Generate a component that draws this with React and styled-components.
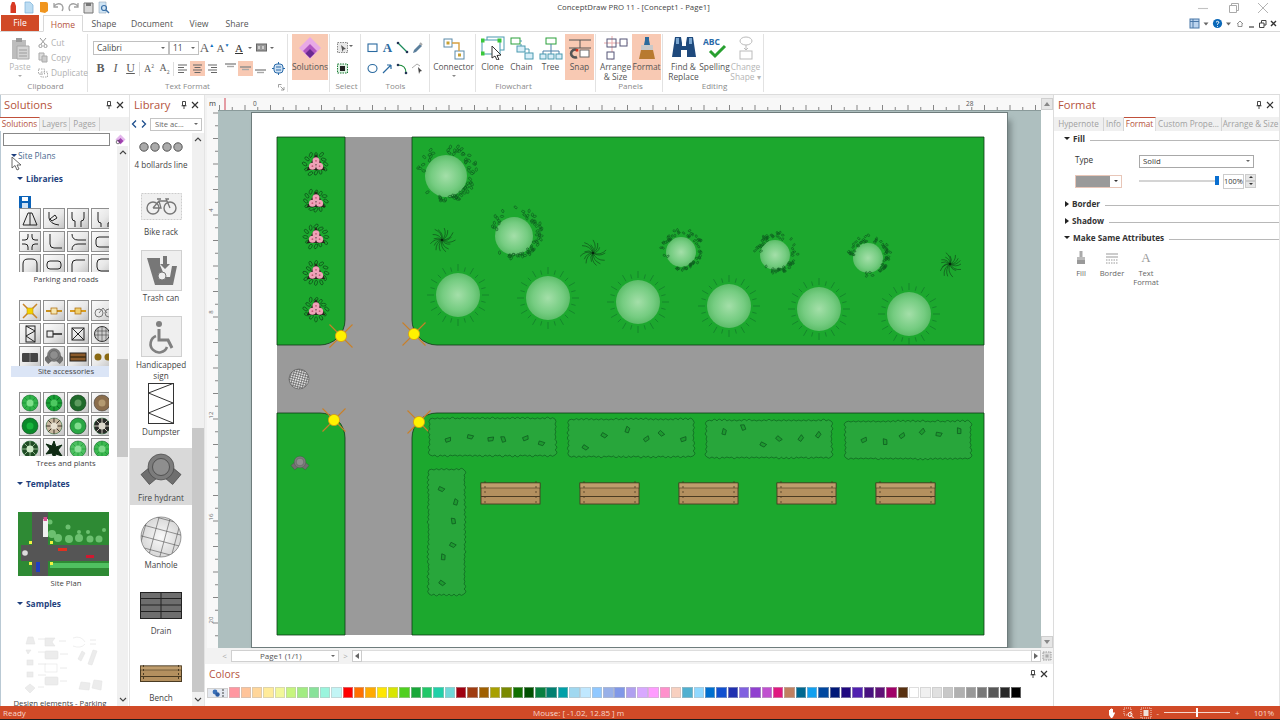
import React from "react";
import styled, { createGlobalStyle } from "styled-components";

const FONT = `"Open Sans", "Noto Sans", sans-serif`;

const Global = createGlobalStyle`
  html, body { margin: 0; padding: 0; background: #fff; }
  body { width: 1280px; height: 720px; overflow: hidden; font-family: ${FONT}; color: #444; }
  * { box-sizing: border-box; }
`;

/* ---------- shell ---------- */
const Shell = styled.div`
  width: 1280px; height: 720px; display: flex; flex-direction: column; background: #fff; overflow: hidden;
`;
const TitleBar = styled.div`
  height: 15px; display: flex; align-items: center; justify-content: space-between; position: relative; flex: none;
`;
const Qat = styled.div`
  display: flex; align-items: center; padding-left: 6px; height: 15px;
`;
const QatIcon = styled.svg`
  width: 15px; height: 13px; display: block; flex: none;
`;
const Title = styled.div`
  position: absolute; left: 0; right: 13px; top: 1px; text-align: center;
  font-size: 7.8px; line-height: 13px; color: #444;
`;
const WinButtons = styled.div`
  display: flex; align-items: center; gap: 14px; padding-right: 9px; color: #b4b4b4;
`;
const WinBtn = styled.svg`
  width: 16px; height: 12px; display: block;
`;
const TabRow = styled.div`
  height: 17px; display: flex; align-items: flex-end; flex: none; position: relative; border-bottom: 1px solid #d8d8d8;
`;
const FileTab = styled.div`
  width: 38px; height: 16px; margin-left: 1px; background: #d14a27; color: #fff; font-size: 8.6px; line-height: 17px; text-align: center;
`;
const RibbonTab = styled.div`
  width: ${p => p.$w}px; height: ${p => (p.$active ? 17 : 16)}px; font-size: 8.6px; line-height: 18px;
  text-align: center; color: ${p => (p.$active ? "#b5533c" : "#555")};
  ${p => p.$active && `background:#fff; border:1px solid #d8d8d8; border-bottom:1px solid #fff; margin-bottom:-1px; position:relative;`}
`;
const TopRight = styled.div`
  position: absolute; right: 0; top: 1px; height: 15px; display: flex; align-items: center;
`;
const TopRightIcon = styled.svg`
  width: ${p => p.$w || 11}px; height: 11px; display: block; flex: none;
`;
const Ribbon = styled.div`
  height: 63px; flex: none; display: flex; align-items: flex-start; border-bottom: 1px solid #dcdcdc; padding-top: 2px;
`;
const Group = styled.div`
  width: ${p => p.$w}px; height: 58px; flex: none; display: flex; flex-direction: column; position: relative;
  border-right: 1px solid #e2e2e2;
`;
const GroupBody = styled.div`
  height: 46px; flex: none; display: flex; padding-left: ${p => p.$pl || 0}px; align-items: flex-start;
`;
const GroupLabel = styled.div`
  height: 11px; text-align: center; font-size: 8px; line-height: 11px; color: #8a8a8a;
  padding-left: ${p => p.$pl || 0}px; padding-right: ${p => p.$pr || 0}px;
`;
const Launcher = styled.svg`
  position: absolute; right: 2px; bottom: 1px; width: 7px; height: 7px;
`;
const BigButton = styled.div`
  width: ${p => p.$w}px; height: 46px; flex: none; display: flex; flex-direction: column; align-items: center;
  background: ${p => (p.$on ? "#f8c9b3" : "transparent")};
  color: ${p => (p.$dim ? "#b5b5b5" : "#555")};
`;
const BigIconBox = styled.div`
  height: 28px; flex: none; display: flex; align-items: center; justify-content: center;
`;
const BigIcon = styled.svg`
  width: ${p => p.$s || 24}px; height: ${p => p.$s || 24}px; display: block;
`;
const BigLabel = styled.div`
  font-size: 8.4px; line-height: 9.6px; text-align: center; white-space: nowrap;
`;
const Caret = styled.span`
  display: ${p => (p.$block ? "block" : "inline-block")}; width: 0; height: 0; flex: none;
  ${p => (p.$block ? "margin-top: 3px;" : "")}
  border-left: ${p => p.$s || 2.5}px solid transparent; border-right: ${p => p.$s || 2.5}px solid transparent;
  border-top: ${p => (p.$s || 2.5) * 1.1}px solid ${p => p.$c || "#666"};
`;
const SelectCaret = styled(Caret)`
  margin: 11px 0 0 -1px;
`;
const SideCaret = styled.span`
  display: inline-block; width: 0; height: 0; flex: none;
  border-top: 3px solid transparent; border-bottom: 3px solid transparent; border-left: 4px solid ${p => p.$c || "#222"};
  ${p => (p.$flip ? "transform: scaleX(-1);" : "")}
`;
const ActionColumn = styled.div`
  display: flex; flex-direction: column; margin-left: 4px; padding-top: 1px;
`;
const Action = styled.div`
  height: 15px; display: flex; align-items: center; gap: 3px; font-size: 8.4px; color: #b0b0b0; white-space: nowrap;
`;
const ActionIcon = styled.svg`
  width: 10px; height: 11px; display: block; flex: none;
`;
const FormatStack = styled.div`
  display: flex; flex-direction: column; padding-top: 6px; gap: 6px;
`;
const FormatRow = styled.div`
  display: flex; align-items: center; height: ${p => p.$h || 15}px;
`;
const FontBox = styled.div`
  width: ${p => p.$w}px; height: 14px; flex: none; border: 1px solid #c0c0c0; margin-left: ${p => p.$ml || 0}px;
  display: flex; align-items: center; justify-content: space-between; padding: 0 3px; font-size: 8.4px; color: #444;
`;
const ToolBtn = styled.div`
  width: ${p => p.$w || 15}px; height: 15px; flex: none; display: flex; align-items: center; justify-content: center;
  background: ${p => (p.$on ? "#f8c9b3" : "transparent")}; color: #555; font-size: 10px;
`;
const ToolIcon = styled.svg`
  width: 13px; height: 13px; display: block;
`;
const Sep = styled.div`
  width: 1px; height: 14px; background: #ddd; flex: none; margin: 0 ${p => p.$m || 1}px;
`;
const BoldB = styled.span`
  font-family: "Liberation Serif", serif; font-weight: ${p => (p.$b ? 700 : 400)}; font-style: ${p => (p.$i ? "italic" : "normal")};
  text-decoration: ${p => (p.$u ? "underline" : "none")}; font-size: ${p => p.$s || 11}px; color: ${p => p.$c || "#5c5c5c"};
`;
const Mini = styled.sup`
  font-size: 5px; color: ${p => p.$c || "#5c5c5c"}; font-family: ${FONT};
`;
const MiniSub = styled.sub`
  font-size: 5px; color: #5c5c5c; font-family: ${FONT};
`;
const IconGrid = styled.div`
  display: grid; grid-template-columns: repeat(${p => p.$cols}, 15px); grid-auto-rows: 21px; padding-top: 3px;
  justify-items: center; align-items: center;
`;

/* ---------- main ---------- */
const Main = styled.div`
  height: 611px; flex: none; display: flex;
`;
const Panel = styled.div`
  width: ${p => p.$w}px; flex: none; display: flex; flex-direction: column; height: 100%; background: #fff;
  border-right: 1px solid #e4e4e4; position: relative; overflow: hidden;
  ${p => (p.$edge ? "box-shadow: inset 1px 0 0 #b9c9d4;" : "")}
`;
const PanelHeader = styled.div`
  height: 22px; flex: none; display: flex; align-items: center; justify-content: space-between; padding: 0 5px 3px 4px;
  font-size: 11.2px; color: #b5533c;
`;
const HeaderTools = styled.div`
  display: flex; align-items: center; gap: 3px;
`;
const Glyph = styled.svg`
  width: 8px; height: 8px; display: block;
`;
const SearchGlyph = styled.svg`
  width: 11px; height: 11px; display: block;
`;
const DotsGlyph = styled.svg`
  width: 2px; height: 8px; display: block;
`;
const TabStrip = styled.div`
  height: 14px; flex: none; display: flex; align-items: stretch; background: #f0f0f0; font-size: 8.2px; color: #a0a0a0;
`;
const StripTab = styled.div`
  width: ${p => p.$w}px; flex: none; line-height: 12px; text-align: center; white-space: nowrap;
  border-top: 1px solid ${p => (p.$on ? "#c0503a" : "transparent")};
  border-right: 1px solid ${p => (p.$on ? "#ddd" : "#d4d4d4")};
  background: ${p => (p.$on ? "#fff" : "transparent")};
  color: ${p => (p.$on ? "#b5533c" : "#a0a0a0")};
`;
const SearchRow = styled.div`
  height: 15px; flex: none; display: flex; align-items: center; padding: 1px 0 0 3px; gap: 5px;
`;
const SearchBox = styled.div`
  width: 107px; height: 13px; border: 1px solid #888; background: #fff; flex: none;
`;
const SolutionBody = styled.div`
  flex: 1; position: relative; overflow: hidden; display: flex;
`;
const Tree = styled.div`
  width: 117px; flex: none; overflow: hidden; position: relative;
`;
const TreeRoot = styled.div`
  height: 20px; display: flex; align-items: center; gap: 1px; padding: 0 0 1px 11px; font-size: 8.4px; color: #4a6a90;
`;
const TreeHeading = styled.div`
  height: 14px; margin-top: ${p => p.$mt}px; display: flex; align-items: center; gap: 3px; padding: 0 0 1px 17px;
  font-size: 8.4px; font-weight: 700; color: #1e3f7d;
`;
const SaveIcon = styled.svg`
  width: 12px; height: 12px; display: block; margin: 10px 0 0 19px;
`;
const TileClip = styled.div`
  width: 90px; height: ${p => p.$h}px; margin: ${p => p.$mt || 0}px 0 0 19px; overflow: hidden;
`;
const TileGrid = styled.div`
  display: grid; grid-template-columns: repeat(4, 22px); grid-auto-rows: 21px; gap: 2px; width: 94px;
`;
const Tile = styled.div`
  width: 22px; height: 21px; border: 1px solid #8f8f8f;
  background: linear-gradient(135deg, #fafafa 0%, #e8e8e8 55%, #c4c4c4 100%);
  display: flex; align-items: center; justify-content: center;
`;
const TileSvg = styled.svg`
  width: 18px; height: 18px; display: block;
`;
const TreeCaption = styled.div`
  height: ${p => p.$h || 14}px; width: 98px; margin-left: 11px; padding-left: ${p => (p.$plain ? 0 : 12)}px; text-align: center; font-size: 7.7px;
  line-height: ${p => p.$h || 14}px; color: #444; white-space: nowrap; overflow: hidden;
  background: ${p => (p.$on ? "#dbe5f6" : "transparent")};
`;
const Thumb = styled.svg`
  display: block; width: 91px; height: ${p => p.$h}px; margin: ${p => p.$mt}px 0 0 18px;
`;
const VScroll = styled.div`
  width: ${p => p.$w || 11}px; flex: none; background: #f0f0f0; display: flex; flex-direction: column; align-items: center;
  justify-content: space-between; position: relative; padding: ${p => p.$pad || "3px 0"};
`;
const ScrollThumb = styled.div`
  position: absolute; left: 0; right: 0; top: ${p => p.$t}px; height: ${p => p.$h}px; background: #c8c8c8;
`;
const ArrowGlyph = styled.svg`
  width: 8px; height: 6px; display: block; position: relative; z-index: 1;
`;
const Cursor = styled.svg`
  position: absolute; left: 11px; top: 10px; width: 11px; height: 15px;
`;

const LibNav = styled.div`
  height: 14px; flex: none; display: flex; align-items: center; padding-left: 0; margin-bottom: 2px;
`;
const NavChevron = styled.svg`
  width: 9px; height: 10px; display: block; flex: none;
`;
const LibCombo = styled.div`
  width: 52px; height: 13px; margin-left: 2px; border: 1px solid #c4c4c4; display: flex; align-items: center;
  justify-content: space-between; padding: 0 3px 0 4px; font-size: 7.6px; color: #666; white-space: nowrap;
`;
const LibBody = styled.div`
  flex: 1; display: flex; overflow: hidden; min-height: 0;
`;
const LibList = styled.div`
  width: 62px; flex: none; overflow: hidden;
  display: flex; flex-direction: column; gap: 9.65px;
`;
const LibItem = styled.div`
  height: 57px; flex: none; display: flex; flex-direction: column; align-items: center; position: relative;
  background: ${p => (p.$on ? "#d9d9d9" : "transparent")};
  margin-top: ${p => p.$mt || 0}px;
`;
const LibIconBox = styled.div`
  height: 44px; flex: none; display: flex; align-items: center; justify-content: center;
  padding-top: ${p => p.$pt || 0}px;
`;
const LibIcon = styled.svg`
  width: ${p => p.$w}px; height: ${p => p.$h}px; display: block;
`;
const LibCaption = styled.div`
  font-size: 8.1px; line-height: 11px; text-align: center; color: #444; width: 62px;
`;

/* centre */
const Centre = styled.div`
  flex: 1; min-width: 0; display: flex; flex-direction: column; background: #f2f2f2; border-right: 1px solid #dcdcdc;
  padding-top: 3px; padding-left: 2px;
`;
const RulerRow = styled.div`
  height: 12px; flex: none; display: flex; position: relative;
`;
const RulerCorner = styled.div`
  width: 11px; flex: none; background: #f8f8f8; font-size: 7.5px; line-height: 11px; text-align: center; color: #333;
`;
const RulerSvg = styled.svg`
  display: block; flex: none; background: #f8f8f8;
`;
const ScrollCap = styled.div`
  width: 12px; height: 12px; flex: none; background: #e6e6e6; border: 1px solid #cfcfcf; display: flex; align-items: center; justify-content: center;
`;
const CapUp = styled.span`
  width: 0; height: 0; border-left: 3px solid transparent; border-right: 3px solid transparent; border-bottom: 4px solid #888;
`;
const CapDown = styled.span`
  width: 0; height: 0; border-left: 3px solid transparent; border-right: 3px solid transparent; border-top: 4px solid #888;
`;
const CanvasRow = styled.div`
  height: 538px; flex: none; display: flex;
`;
const Canvas = styled.div`
  flex: 1; background: #aebfbf; overflow: hidden; padding: 2px 0 0 34px; border-top: 1px solid #8a9a9a;
`;
const CanvasScroll = styled.div`
  width: 12px; flex: none; background: #fff; display: flex; flex-direction: column; justify-content: flex-end;
`;
const Sheet = styled.svg`
  display: block; width: 755px; height: 534px; background: #fff; overflow: visible;
  box-shadow: 4px 7px 6px rgba(40,50,50,.4); outline: 1px solid #6e7c7c;
`;
const PageBar = styled.div`
  height: 14px; flex: none; display: flex; align-items: center; padding: 0 0 0 11px; background: #f2f2f2; margin-top: 1px;
  font-size: 8px; color: #555;
`;
const PageArrow = styled.div`
  width: ${p => p.$w || 13}px; flex: none; text-align: center; color: #aaa; font-size: 8px; line-height: 12px;
`;
const FitGlyph = styled.svg`
  width: 10px; height: 10px; display: block; margin: 0 1px;
`;
const PageCombo = styled.div`
  width: 108px; height: 12px; flex: none; background: #fff; border: 1px solid #d0d0d0; display: flex; align-items: center;
  justify-content: space-between; padding: 0 3px 0 28px; line-height: 10px;
`;
const HScrollEnd = styled.div`
  width: 10px; height: 12px; flex: none; background: #fff; border: 1px solid #ccc; display: flex; align-items: center; justify-content: center;
`;
const HScrollTrack = styled.div`
  flex: 1; height: 12px; background: #fff; border-top: 1px solid #ddd; border-bottom: 1px solid #ddd;
`;
const ColorPanel = styled.div`
  flex: 1; background: #fff; margin-left: -2px; display: flex; flex-direction: column; margin-top: 1px; min-height: 0;
`;
const ColorHead = styled.div`
  height: 23px; flex: none; display: flex; align-items: center; justify-content: space-between; padding: 0 5px 4px 4px;
  font-size: 10.4px; color: #b5533c;
`;
const SwatchRow = styled.div`
  display: flex; align-items: center; height: 11px;
`;
const SwatchTool = styled.div`
  width: 21px; height: 10px; margin: 0 1.3px 0 2px; flex: none; background: #e4e8ef; border: 1px solid #d0d0d0;
  display: flex; align-items: center; justify-content: center; gap: 2px;
`;
const Swatch = styled.div`
  width: 10.4px; height: 11px; margin-right: .95px; flex: none; background: ${p => p.$c};
  border: 1px solid rgba(190,190,190,.5);
`;

/* format panel */
const FormatBody = styled.div`
  flex: 1; margin-top: -1px; font-size: 8.2px; color: #333;
`;
const SectionRow = styled.div`
  height: 17px; display: flex; align-items: center; gap: 3px; padding-left: ${p => (p.$open ? 10 : 11)}px;
  font-weight: 700; font-size: 8.2px; color: #333; white-space: nowrap; margin-top: ${p => p.$mt || 0}px;
`;
const SectionRule = styled.div`
  flex: 1; height: 1px; background: #b8b8b8; margin: 4px 0 0 2px;
`;
const TypeRow = styled.div`
  display: flex; align-items: center; height: 14px; margin-top: 7px; padding-left: 21px; font-weight: 400;
`;
const TypeLabel = styled.div`
  width: 64px; flex: none; margin-top: -3px;
`;
const TypeSelect = styled.div`
  width: 115px; height: 13px; border: 1px solid #a8a8a8; display: flex; align-items: center;
  justify-content: space-between; padding: 0 3px; font-size: 7.8px;
`;
const FillRow = styled.div`
  display: flex; align-items: center; height: 16px; margin-top: 5px; padding-left: 21px;
`;
const ColorPick = styled.div`
  width: 47px; height: 13px; flex: none; border: 1px solid #e8c6b8; display: flex; align-items: center;
`;
const ColorChip = styled.div`
  width: 34px; height: 11px; background: #9a9a9a;
`;
const ColorArrow = styled.div`
  flex: 1; display: flex; justify-content: center;
`;
const Slider = styled.div`
  width: 78px; height: 2px; margin-left: 17px; background: #d4d4d4; position: relative; flex: none;
`;
const SliderThumb = styled.div`
  position: absolute; right: -2px; top: -4px; width: 4px; height: 9px; background: #0a6fd0;
`;
const Percent = styled.div`
  width: 21px; height: 15px; margin-left: 6px; flex: none; border: 1px solid #ccc; font-size: 7.4px; line-height: 13px; text-align: center;
`;
const Spin = styled.div`
  width: 11px; height: 15px; flex: none; display: flex; flex-direction: column; margin-left: 1px;
`;
const SpinBtn = styled.div`
  height: 7px; background: #e6e6e6; border: 1px solid #ccc; display: flex; align-items: center; justify-content: center;
`;
const SpinUp = styled.span`
  width: 0; height: 0; border-left: 2px solid transparent; border-right: 2px solid transparent;
  border-bottom: 2px solid #333;
`;
const AttrRow = styled.div`
  display: flex; padding: 4px 0 0 14px; color: #666;
`;
const Attr = styled.div`
  width: ${p => p.$w}px; flex: none; display: flex; flex-direction: column; align-items: center; font-size: 7.6px; line-height: 9px; text-align: center;
`;
const AttrIcon = styled.svg`
  width: 14px; height: 15px; display: block; margin-bottom: 4px;
`;

/* status */
const Status = styled.div`
  height: 13px; flex: none; background: #d14a27; display: flex; align-items: center; color: #f6d8cd; font-size: 8px; position: relative;
`;
const BlackLine = styled.div`
  height: 1px; flex: none; background: #1a1a1a;
`;
const Ready = styled.div`
  padding-left: 3px; width: 533px; flex: none;
`;
const StatusRight = styled.div`
  margin-left: auto; display: flex; align-items: center; padding-right: 6px; gap: 5px;
`;
const StatusIcon = styled.svg`
  width: 12px; height: 12px; display: block;
`;
const ZoomTrack = styled.div`
  width: 66px; height: 1px; background: #f5d7cd; position: relative;
`;
const ZoomThumb = styled.div`
  position: absolute; left: 32px; top: -4px; width: 2px; height: 9px; background: #fff;
`;
const PercentText = styled.span`
  margin-left: 9px;
`;

/* ---------- shared glyphs ---------- */
const PinGlyph = () => (
  <Glyph viewBox="0 0 8 8"><path d="M2.5 .5h3v4h-3zM1.5 4.8h5M4 5v3" stroke="#333" fill="none" strokeWidth=".9" /></Glyph>
);
const CloseGlyph = () => (
  <Glyph viewBox="0 0 8 8"><path d="M1 1l6 6M7 1l-6 6" stroke="#333" strokeWidth="1.2" /></Glyph>
);
const Up = () => (<ArrowGlyph viewBox="0 0 8 6"><path d="M1 5l3-3 3 3" fill="none" stroke="#444" strokeWidth="1.1" /></ArrowGlyph>);
const Down = () => (<ArrowGlyph viewBox="0 0 8 6"><path d="M1 1l3 3 3-3" fill="none" stroke="#444" strokeWidth="1.1" /></ArrowGlyph>);

function rng(seed) {
  let s = seed;
  return () => { s = (s * 16807) % 2147483647; return (s - 1) / 2147483646; };
}

/* ---------- site plan drawing ---------- */
const BRD = "#0e5a20";
const Defs = () => (
  <defs>
    <radialGradient id="tree"><stop offset="0" stopColor="#a4dfa9" /><stop offset=".7" stopColor="#75cc81" /><stop offset="1" stopColor="#5cbd69" /></radialGradient>
    <radialGradient id="metal"><stop offset="0" stopColor="#fafafa" /><stop offset="1" stopColor="#d8d8d8" /></radialGradient>
    <clipPath id="mh"><circle cx="0" cy="0" r="10" /></clipPath>
  </defs>
);
const RayTree = ({ x, y }) => {
  const rays = [];
  for (let i = 0; i < 24; i++) {
    const a = (i / 24) * Math.PI * 2;
    const l = i % 2 ? 28.5 : 31;
    rays.push(<line key={i} x1={x + Math.cos(a) * 24} y1={y + Math.sin(a) * 24} x2={x + Math.cos(a) * l} y2={y + Math.sin(a) * l} stroke="#11792a" strokeWidth=".7" />);
  }
  return <g>{rays}<circle cx={x} cy={y} r="22" fill="url(#tree)" /></g>;
};
const Bush = ({ x, y, r, seed }) => {
  const rand = rng(seed);
  const leaves = [];
  for (let i = 0; i < 62; i++) {
    const a = -3 + rand() * 4.9 + (rand() < .12 ? 2.4 : 0);
    const top = Math.sin(a) < .2;
    const d = r * (1.02 + rand() * (top ? .42 : .28));
    const px = x + r * .08 + Math.cos(a) * d, py = y - r * .08 + Math.sin(a) * d;
    leaves.push(
      <ellipse key={i} cx={px} cy={py} rx={r * .075 + .3} ry={r * .04 + .3}
        transform={`rotate(${rand() * 180} ${px} ${py})`}
        fill="none" stroke={BRD} strokeWidth=".6" />
    );
  }
  return <g><circle cx={x} cy={y} r={r} fill="url(#tree)" />{leaves}</g>;
};
const Spiky = ({ x, y, seed }) => {
  const rand = rng(seed);
  const l = [];
  for (let i = 0; i < 16; i++) {
    const a = (i / 16) * Math.PI * 2 + rand() * .2;
    const d = 8 + rand() * 6;
    const ex = x + Math.cos(a) * d, ey = y + Math.sin(a) * d;
    const cx = x + Math.cos(a + .6) * d * .6, cy = y + Math.sin(a + .6) * d * .6;
    l.push(<path key={i} d={`M${x} ${y}Q${cx} ${cy} ${ex} ${ey}`} fill="none" stroke="#0a2f12" strokeWidth=".5" />);
  }
  return <g>{l}<circle cx={x} cy={y} r="1" fill="#06200c" /></g>;
};
const Flower = ({ x, y }) => {
  const rand = rng(Math.round(x * y));
  const ls = [];
  for (let i = 0; i < 12; i++) {
    const a = (i / 12) * Math.PI * 2;
    const dist = 8.5 + rand() * 3;
    const px = x + Math.cos(a) * dist, py = y + Math.sin(a) * dist;
    ls.push(<ellipse key={i} cx={px} cy={py} rx="2.6" ry="1.4" transform={`rotate(${a * 57.3 + rand() * 50} ${px} ${py})`} fill="none" stroke="#0a3314" strokeWidth=".55" />);
  }
  return (
    <g>
      {ls}
      <path d={`M${x} ${y - 8}L${x + 7.5} ${y + 5}L${x - 7.5} ${y + 5}Z`} fill="#25251a" stroke="#25251a" strokeWidth="2" />
      {[[0, -3.2], [-3.6, 2.2], [3.6, 2.2]].map(([dx, dy], i) => (
        <g key={i}><circle cx={x + dx} cy={y + dy} r="3.5" fill="#f0a2b8" /><circle cx={x + dx} cy={y + dy} r=".9" fill="#c8587a" /></g>
      ))}
    </g>
  );
};
const Lamp = ({ x, y }) => (
  <g>
    <path d={`M${x - 11.5} ${y - 11.5}L${x + 11.5} ${y + 11.5}M${x + 11.5} ${y - 11.5}L${x - 11.5} ${y + 11.5}`} stroke="#c8802a" strokeWidth="1.1" />
    <circle cx={x} cy={y} r="5.6" fill="#fff200" stroke="#d69a14" strokeWidth=".8" />
  </g>
);
const hedgePath = (x, y, w, h, seed) => {
  const rand = rng(seed);
  const step = 5;
  let d = `M${x} ${y}`;
  const edge = (dx, dy, len, nx, ny) => {
    const n = Math.round(len / step);
    const sx = (dx * len) / n, sy = (dy * len) / n;
    for (let i = 0; i < n; i++) {
      const b = 1.6 + rand() * 2.2;
      d += `q${sx / 2 + nx * b} ${sy / 2 + ny * b} ${sx} ${sy}`;
    }
  };
  edge(1, 0, w, 0, -1); edge(0, 1, h, 1, 0); edge(-1, 0, w, 0, 1); edge(0, -1, h, -1, 0);
  return d + "Z";
};
const Hedge = ({ x, y, w, h, seed }) => {
  const rand = rng(seed + 3);
  const n = 6;
  const horiz = w > h;
  const leaves = [];
  for (let i = 0; i < n; i++) {
    const px = horiz ? x + w * (.12 + i * .15) + rand() * 6 : x + w * (.3 + rand() * .4);
    const py = horiz ? y + h * (.25 + rand() * .45) : y + h * (.1 + i * .15) + rand() * 5;
    leaves.push(<path key={i} d={`M${px} ${py}l5 -3l.8 3.6l-4 2.4z`} fill="#1e9a30" stroke="#0e5a20" strokeWidth=".7" transform={`rotate(${rand() * 160 - 80} ${px} ${py})`} />);
  }
  return <g><path d={hedgePath(x, y, w, h, seed)} fill="#28a63b" stroke="#0f5e20" strokeWidth=".7" />{leaves}</g>;
};
const Bench = ({ x, y }) => (
  <g>
    <rect x={x} y={y + 2} width="59" height="21" fill="#b4905f" stroke="#4b3b22" strokeWidth=".9" />
    <rect x={x} y={y + 2} width="59" height="5" fill="#bf9d6d" stroke="#4b3b22" strokeWidth=".6" />
    <path d={`M${x} ${y + 15.5}h59`} stroke="#4b3b22" strokeWidth="1" />
    <path d={`M${x + 4} ${y}v23M${x + 55} ${y}v23`} stroke="#4b3b22" strokeWidth=".8" strokeDasharray="2 3" />
  </g>
);
const Hydrant = ({ x, y, s = 1 }) => (
  <g transform={`translate(${x} ${y}) scale(${s})`}>
    <rect x="-18.5" y="4.3" width="13" height="10" fill="#6f6f6f" stroke="#3c3c3c" strokeWidth=".6" transform="rotate(50 -12 9.3)" />
    <rect x="5.5" y="4.3" width="13" height="10" fill="#6f6f6f" stroke="#3c3c3c" strokeWidth=".6" transform="rotate(-50 12 9.3)" />
    <circle r="13" fill="#7c7c7c" stroke="#3c3c3c" strokeWidth=".6" />
    <circle r="8.5" fill="#8e8e8e" stroke="#3c3c3c" strokeWidth=".7" />
  </g>
);
const Manhole = ({ x, y, s = 1, gap = 3, w = .55 }) => {
  const vs = [];
  for (let v = -9; v <= 9; v += gap) vs.push(v);
  return (
    <g transform={`translate(${x} ${y}) scale(${s})`}>
      <circle r="10" fill="url(#metal)" />
      <g clipPath="url(#mh)" transform="rotate(15)">
        {vs.map(v => (
          <path key={v} d={`M${v} -11V11M-11 ${v}H11`} stroke="#555" strokeWidth={w} />
        ))}
      </g>
      <circle r="10" fill="none" stroke="#555" strokeWidth={w} />
    </g>
  );
};
const SitePlan = () => (
  <Sheet viewBox="252 113 755 534" preserveAspectRatio="none">
    <Defs />
    <rect x="277" y="137" width="707" height="498" fill="#9a9a9a" />
    <g fill="#1ca82e" stroke="#0c3a14" strokeWidth=".8">
      <path d="M277 137H345V320A25 25 0 0 1 320 345H277Z" />
      <path d="M412 137H984V345H437A25 25 0 0 1 412 320Z" />
      <path d="M277 413H320A25 25 0 0 1 345 438V635H277Z" />
      <path d="M437 413H984V635H412V438A25 25 0 0 1 437 413Z" />
    </g>
    {[164, 201, 237, 273, 309].map(y => <Flower key={y} x={316} y={y} />)}
    <Bush x={446} y={176} r={21} seed={11} />
    <Bush x={514} y={236} r={19} seed={23} />
    <Bush x={681} y={252} r={15} seed={37} />
    <Bush x={775} y={255} r={15} seed={41} />
    <Bush x={868} y={258} r={15} seed={57} />
    <Spiky x={442} y={240} seed={7} />
    <Spiky x={593} y={253} seed={13} />
    <Spiky x={950} y={264} seed={19} />
    {[[458, 295], [548, 298], [638, 302], [729, 306], [819, 309], [909, 314]].map(([x, y]) => <RayTree key={x} x={x} y={y} />)}
    <Lamp x={341} y={336} /><Lamp x={414} y={334} /><Lamp x={334} y={420} /><Lamp x={419} y={422} />
    <Manhole x={299} y={379} gap={2.4} w={.6} />
    <Hydrant x={300} y={462} s={.45} />
    <Hedge x={430} y={419} w={125} h={36} seed={101} />
    <Hedge x={569} y={420} w={124} h={36} seed={202} />
    <Hedge x={707} y={421} w={124} h={36} seed={303} />
    <Hedge x={846} y={422} w={124} h={36} seed={404} />
    <Hedge x={429} y={470} w={35} h={124} seed={505} />
    {[481, 580, 679, 777, 876].map(x => <Bench key={x} x={x} y={481} />)}
  </Sheet>
);

/* ---------- solution tiles ---------- */
const s = { fill: "none", stroke: "#222", strokeWidth: 1 };
const parking = [
  <path {...s} d="M2 15L7 3h4l5 12zM9 3v12" />,
  <path {...s} d="M4 2v6q1 6 10 7M5 9l5-4 2 3-5 3z" />,
  <path {...s} d="M3 2v6q0 3 3 3v6M15 2v6q0 3-3 3v6" />,
  <path {...s} d="M5 2v8q0 3 3 3v4M18 2v8q0 3-3 3v4" />,
  <path {...s} d="M7 1v3q0 3-3 3H1M11 1v3q0 3 3 3h3M7 17v-3q0-3-3-3H1M11 17v-3q0-3 3-3h3" />,
  <path {...s} d="M5 1v10q0 4 4 4h8" />,
  <path {...s} d="M3 1q0 6 6 6h8M3 17q0-6 6-6h8" />,
  <path {...s} d="M18 4H6q-3 0-3 3v4q0 3 3 3h12" />,
  <path {...s} d="M2 17V8q0-5 5-5h4q5 0 5 5v9" />,
  <rect {...s} x="2" y="5" width="14" height="8" rx="3" />,
  <path {...s} d="M3 17V8q0-4 4-4h9" />,
  <path {...s} d="M18 3H8q-4 0-4 4v4q0 4 4 4h10" />,
];
const access = [
  <g><path d="M2 2l14 14M16 2L2 16" stroke="#c88528" strokeWidth="1.5" /><rect x="6" y="6" width="6" height="6" fill="#f2d000" stroke="#b80" strokeWidth=".5" /></g>,
  <g><path d="M1 9h16" stroke="#c89020" strokeWidth="2" /><rect x="6" y="6" width="6" height="6" fill="#f6e6b0" stroke="#a60" strokeWidth=".7" /></g>,
  <g><path d="M1 9h16" stroke="#d89c20" strokeWidth="2" /><rect x="6" y="6" width="6" height="6" fill="#f0d070" stroke="#a60" strokeWidth=".7" /></g>,
  <g><circle cx="6" cy="11" r="4" {...s} stroke="#777" /><circle cx="16" cy="11" r="4" {...s} stroke="#777" /><path {...s} stroke="#777" d="M6 11l4-5 4 5" /></g>,
  <g><rect x="5" y="1" width="9" height="16" {...s} /><path {...s} d="M5 1l9 5-9 5 9 6" /></g>,
  <g><rect x="2" y="6" width="6" height="6" {...s} /><path {...s} d="M8 9h9" strokeWidth="1.5" /></g>,
  <g><rect x="3" y="3" width="12" height="12" {...s} /><path {...s} d="M3 3l12 12M15 3L3 15" /></g>,
  <g><circle cx="9" cy="9" r="7.5" fill="#ccc" stroke="#333" /><path d="M3 6l12 0M2 10h14M5 3v12M9 2v14M13 3v12" stroke="#444" strokeWidth=".6" /></g>,
  <g><rect x="1" y="5" width="16" height="9" rx="1" fill="#444" /><path d="M9 5v9" stroke="#888" /></g>,
  <Hydrant x={9} y={7} s={.5} />,
  <g><rect x="1" y="5" width="16" height="8" fill="#8a5a2a" stroke="#222" /><path d="M1 9h16" stroke="#3a2a10" strokeWidth="1.4" /></g>,
  <g><circle cx="5" cy="9" r="3.5" fill="#8a6a14" /><circle cx="15" cy="9" r="3.5" fill="#8a6a14" /></g>,
];
const TreeTile = ({ a, b, c = "#0a5a20", dots }) => (
  <g>
    <circle cx="9" cy="9" r="8" fill={b} stroke={c} strokeWidth=".5" />
    {dots && [0, 1, 2, 3, 4, 5, 6, 7].map(i => (
      <line key={i} x1="9" y1="9" x2={9 + Math.cos(i * .785) * 8} y2={9 + Math.sin(i * .785) * 8} stroke={dots} strokeWidth=".9" />
    ))}
    <circle cx="9" cy="9" r="3.5" fill={a} />
  </g>
);
const trees = [
  <TreeTile a="#7ee08a" b="#32b24a" dots="#1a9636" />,
  <TreeTile a="#4cc860" b="#18a034" dots="#0a6a20" />,
  <TreeTile a="#5c9a5e" b="#1f6a2a" c="#0a2a10" />,
  <TreeTile a="#b49a70" b="#8a6d4c" c="#333" />,
  <TreeTile a="#18b43c" b="#0a8a2a" c="#0a3314" />,
  <TreeTile a="#e8e0d0" b="#c8b8a0" dots="#2a2018" />,
  <TreeTile a="#7fdc8d" b="#2aa644" c="#063014" />,
  <TreeTile a="#dcd8cc" b="#2a2a28" dots="#ddd8c8" />,
  <TreeTile a="#cfe8c8" b="#204a24" dots="#9ac898" />,
  <g><path d="M9 1l2 6 6-2-4 5 4 6-6-2-2 4-2-5-6 1 4-5-4-5 6 2z" fill="#102a14" stroke="#0a2a10" /></g>,
  <TreeTile a="#8ee09a" b="#4cc060" dots="#28a040" />,
  <TreeTile a="#7ed88a" b="#3cb850" dots="#1e9a38" />,
];
const TileSet = ({ items }) => (
  <TileGrid>
    {items.map((c, i) => <Tile key={i}><TileSvg viewBox="0 0 18 18">{c}</TileSvg></Tile>)}
  </TileGrid>
);
const SiteThumb = () => (
  <Thumb $h={64} $mt={21} viewBox="0 0 91 64" preserveAspectRatio="none">
    <rect width="91" height="64" fill="#2e8a34" />
    <rect x="14" width="16" height="64" fill="#555" />
    <rect x="3" y="33" width="88" height="16" fill="#555" />
    {[[34, 22, 4], [40, 26, 4], [51, 27, 4], [61, 26, 4], [72, 27, 3.5], [81, 27, 3.5], [32, 10, 2.5], [50, 15, 2.5], [61, 20, 2], [70, 20, 2], [86, 18, 2]].map(([x, y, r], i) => (
      <circle key={i} cx={x} cy={y} r={r} fill="#6cc070" />
    ))}
    <rect x="25" y="7" width="5" height="18" fill="#f0f0f0" /><rect x="25.5" y="5" width="3.5" height="4" fill="#d85090" />
    <rect x="40" y="36" width="9" height="3" fill="#e03020" />
    <rect x="68" y="43" width="8" height="3" fill="#d01830" />
    <rect x="18" y="50" width="4" height="10" fill="#2040c0" />
    <circle cx="7" cy="41" r="2.8" fill="#ddd" />
    <rect x="32" y="51" width="59" height="5" fill="#50c060" />
    {[[11, 29], [32, 29], [11, 50], [32, 50]].map(([x, y]) => <rect key={x + y} x={x} y={y} width="3" height="3" fill="#f0f040" />)}
  </Thumb>
);
const SampleThumb = () => (
  <Thumb $h={62} $mt={23} viewBox="0 0 91 62" preserveAspectRatio="none">
    <g fill="#ececec" stroke="#e4e4e4" strokeWidth=".6">
      <path d="M10 3h5l2 7h-9z" />
      <path d="M8 16h5l-3 4z" />
      <rect x="9" y="26" width="6" height="5" />
      <rect x="9" y="38" width="6" height="5" />
      <path d="M12 50l5 4-5 5-5-5z" />
      <path d="M27 4h10l-3 4 3 4H27z" />
      <rect x="27" y="17" width="13" height="8" rx="1" />
      <rect x="27" y="30" width="12" height="8" fill="none" />
      <rect x="27" y="43" width="13" height="8" rx="1" />
      <path d="M55 4q8-3 12 4M55 12q8 3 12-2" fill="none" />
      <path d="M60 25l4-8 3 2-4 8zM70 30l5-14 4 1-5 14z" />
      <path d="M63 48l9 1-1 7-10-1zM76 46l8 1-1 9-9-2z" />
    </g>
    <g stroke="#eaeaea" strokeWidth="1">
      <path d="M20 5h8M20 18h8M20 30h8M20 41h8M20 53h6M41 7h7M42 20h8M42 34h7M42 47h7M72 6h6M72 10h6" />
    </g>
  </Thumb>
);

/* ---------- swatches ---------- */
const COLORS = "#ff96a0 #ffc49a #ffd69a #ffeb9a #f2f79a #c6f57e #a2ec82 #88e29a #9af5dd #c2f5f5 #ff0000 #ff7000 #ffaa00 #ffe600 #d8e600 #50d020 #18a838 #20c868 #20d0a8 #70d8d8 #a00010 #a03c10 #a06000 #a8a000 #7a8a00 #107000 #005000 #088040 #008070 #00a0a8 #a0d8f0 #c0e8ff #90c8ff #98b0e8 #8098e8 #b0a0f0 #d8a8ff #ff9cff #ff90cc #f8d0c0 #50b0d0 #90d8ff #0070d0 #1050d0 #2030b0 #8060e0 #9040d0 #c050d0 #e01880 #c08060 #006890 #10a0f0 #0048a0 #001878 #200880 #5020b0 #481080 #601078 #a00068 #583010 #ffffff #f0f0f0 #e0e0e0 #c8c8c8 #b0b0b0 #989898 #787878 #585858 #282828 #000000".split(" ");

/* ---------- rulers ---------- */
const HRuler = () => {
  const ticks = [];
  for (let x = 0; x < 822; x += 12.75) {
    const big = Math.round(x / 12.75) % 2 === 0;
    ticks.push(<line key={x} x1={x + 1.5} x2={x + 1.5} y1={big ? 7 : 9} y2="12" stroke="#555" strokeWidth=".7" />);
  }
  return (
    <RulerSvg width="823" height="12">
      {ticks}
      <line x1="7" x2="7" y1="0" y2="12" stroke="#d04050" />
      <text x="35" y="7.5" fontSize="6.5" fontFamily="Open Sans" fill="#555">0</text>
      <text x="748" y="7.5" fontSize="6.5" fontFamily="Open Sans" fill="#555">28</text>
    </RulerSvg>
  );
};
const VRuler = () => {
  const ticks = [];
  for (let y = 3; y < 538; y += 12.75) {
    const big = Math.round((y - 3) / 12.75) % 2 === 0;
    ticks.push(<line key={y} y1={y} y2={y} x1={big ? 6 : 8} x2="11" stroke="#555" strokeWidth=".7" />);
  }
  return (
    <RulerSvg width="11" height="538">
      {ticks}
      {[[100, "4"], [202, "8"], [305, "12"], [407, "16"], [510, "20"]].map(([y, t]) => (
        <text key={t} x="6" y={y} fontSize="6" fontFamily="Open Sans" fill="#666" textAnchor="middle" transform={`rotate(-90 6 ${y})`}>{t}</text>
      ))}
    </RulerSvg>
  );
};

/* ---------- ribbon icons ---------- */
const AlignIcon = ({ kind }) => {
  const lines = kind === "l" ? "M2 3h9M2 5.5h6M2 8h9M2 10.5h6" : kind === "c" ? "M2 3h9M3.5 5.5h6M2 8h9M3.5 10.5h6" : "M2 3h9M5 5.5h6M2 8h9M5 10.5h6";
  return <ToolIcon viewBox="0 0 13 13"><path d={lines} stroke="#666" strokeWidth="1.2" /></ToolIcon>;
};
const VAlignIcon = ({ y }) => (
  <ToolIcon viewBox="0 0 13 13"><path d={`M1 ${y}h11`} stroke="#8a8a8a" strokeWidth="1.4" /><path d={`M3 ${y + 2.5}h7`} stroke="#a8a8a8" strokeWidth="1.4" /></ToolIcon>
);

export default function App() {
  return (
    <Shell>
      <Global />
      <TitleBar>
        <Qat>
          <QatIcon viewBox="0 0 15 13"><path d="M6 1l2.5 0 1.5 4v7H4.5V5z" fill="#d83a24" /></QatIcon>
          <QatIcon viewBox="0 0 15 13"><path d="M4 1h5l3 3v8H4z" fill="#bcdcf2" stroke="#7ab0d8" strokeWidth=".7" /></QatIcon>
          <QatIcon viewBox="0 0 15 13"><path d="M4 1h6q2 0 2 2v7l-3 2-5-1z" fill="#f0951e" /></QatIcon>
          <QatIcon viewBox="0 0 15 13"><path d="M3 5q4-4 8-1 2 3 0 6M3 2v4h4" fill="none" stroke="#a0a0a0" strokeWidth="1.3" /></QatIcon>
          <QatIcon viewBox="0 0 15 13"><path d="M12 5q-4-4-8-1-2 3 0 6M12 2v4H8" fill="none" stroke="#a0a0a0" strokeWidth="1.3" /></QatIcon>
          <QatIcon viewBox="0 0 15 13"><path d="M3 2h9v10H3z" fill="#d8d8d8" stroke="#777" /><path d="M5 2h5v3H5z" fill="#777" /></QatIcon>
          <QatIcon viewBox="0 0 15 13"><path d="M3 1h7v11H3z" fill="#cfe4f4" stroke="#9ab" strokeWidth=".6" /><circle cx="8" cy="7" r="2.5" fill="none" stroke="#3a70a8" strokeWidth="1.2" /><path d="M10 9l3 3" stroke="#3a70a8" strokeWidth="1.4" /></QatIcon>
        </Qat>
        <Title>ConceptDraw PRO 11 - [Concept1 - Page1]</Title>
        <WinButtons>
          <WinBtn viewBox="0 0 16 12"><path d="M3 6.5h10" stroke="#c2c2c2" strokeWidth="1.1" /></WinBtn>
          <WinBtn viewBox="0 0 16 12"><path d="M4.5 3.5h7v7h-7zM6.5 3.5v-2h7v7h-2" fill="none" stroke="#aaa" /></WinBtn>
          <WinBtn viewBox="0 0 16 12"><path d="M3 1l10 10M13 1L3 11" stroke="#b4b4b4" /></WinBtn>
        </WinButtons>
      </TitleBar>
      <TabRow>
        <FileTab>File</FileTab>
        <RibbonTab $w={4} />
        <RibbonTab $w={40} $active>Home</RibbonTab>
        <RibbonTab $w={42}>Shape</RibbonTab>
        <RibbonTab $w={54}>Document</RibbonTab>
        <RibbonTab $w={40}>View</RibbonTab>
        <RibbonTab $w={36}>Share</RibbonTab>
        <TopRight>
          <TopRightIcon viewBox="0 0 11 11"><rect x="1" y="1" width="9" height="9" fill="#bcd4ee" stroke="#4a78a8" /><path d="M1 3.5h9M4 1v9" stroke="#4a78a8" /></TopRightIcon>
          <TopRightIcon $w={12} viewBox="0 0 12 11"><path d="M3.5 4.5h5l-2.5 3z" fill="#666" /></TopRightIcon>
          <TopRightIcon viewBox="0 0 11 11"><circle cx="5.5" cy="5.5" r="4.6" fill="#0a68b8" /><path d="M4 4.2q1.5-1.8 3 0 0 1-1.5 1.7v.8M5.5 8v.8" stroke="#fff" fill="none" /></TopRightIcon>
          <TopRightIcon viewBox="0 0 11 11"><path d="M3 4.5h5l-2.5 3z" fill="#666" /></TopRightIcon>
          <TopRightIcon $w={12} viewBox="0 0 12 11"><path d="M3 6l3-3 3 3M4 5.5v3h4v-3" fill="none" stroke="#777" strokeWidth=".8" /></TopRightIcon>
          <TopRightIcon viewBox="0 0 11 11"><path d="M3 9h5" stroke="#444" strokeWidth="1.2" /></TopRightIcon>
          <TopRightIcon viewBox="0 0 11 11"><path d="M2.5 5h4.5v4.5H2.5zM4.5 5V2.5H9V7H7" fill="none" stroke="#444" /></TopRightIcon>
          <TopRightIcon viewBox="0 0 11 11"><path d="M3 3l5 5M8 3l-5 5" stroke="#333" strokeWidth="1.4" /></TopRightIcon>
          <TopRightIcon $w={1} />
        </TopRight>
      </TabRow>

      <Ribbon>
        <Group $w={88}>
          <GroupBody $pl={6}>
            <BigButton $w={28} $dim>
              <BigIconBox>
                <BigIcon $s={24} viewBox="0 0 24 24"><path d="M4 4h14v19H4z" fill="#bdbdbd" /><path d="M8 2h6v4H8z" fill="#9a9a9a" /><path d="M9 10h12v13H9z" fill="#d4d4d4" stroke="#a8a8a8" /><path d="M11 14h8M11 17h8M11 20h8" stroke="#9c9c9c" /></BigIcon>
              </BigIconBox>
              <BigLabel>Paste</BigLabel>
              <Caret $block $c="#aaa" />
            </BigButton>
            <ActionColumn>
              <Action>
                <ActionIcon viewBox="0 0 10 11"><path d="M2 1l5 6M8 1L3 7" stroke="#999" fill="none" /><circle cx="2.5" cy="9" r="1.6" fill="none" stroke="#999" /><circle cx="7.5" cy="9" r="1.6" fill="none" stroke="#999" /></ActionIcon>Cut
              </Action>
              <Action>
                <ActionIcon viewBox="0 0 10 11"><path d="M1 1h5v7H1z" fill="#ddd" stroke="#aaa" /><path d="M4 4h5v6H4z" fill="#ccc" stroke="#aaa" /></ActionIcon>Copy
              </Action>
              <Action>
                <ActionIcon viewBox="0 0 10 11"><path d="M.5 2h6v5h-6zM3 5h6.5v5H3z" fill="none" stroke="#aaa" strokeDasharray="1.5 1" /></ActionIcon>Duplicate
              </Action>
            </ActionColumn>
          </GroupBody>
          <GroupLabel $pl={4}>Clipboard</GroupLabel>
        </Group>

        <Group $w={200}>
          <GroupBody>
            <FormatStack>
              <FormatRow>
                <FontBox $w={76} $ml={5}>Calibri<Caret /></FontBox>
                <FontBox $w={30}>11<Caret /></FontBox>
                <ToolBtn $w={16}><BoldB $s={13}>A<Mini $c="#1070c0">▲</Mini></BoldB></ToolBtn>
                <ToolBtn $w={16}><BoldB $s={11}>A<Mini $c="#1070c0">▼</Mini></BoldB></ToolBtn>
                <ToolBtn $w={16}><BoldB $s={11} $u $c="#333">A</BoldB></ToolBtn>
                <ToolBtn $w={6}><Caret $s={2} /></ToolBtn>
                <ToolBtn $w={16}><ToolIcon viewBox="0 0 13 13"><rect x="1.5" y="3" width="10" height="7" fill="#999" stroke="#666" /><path d="M4 5v3M8 5v3" stroke="#fff" /></ToolIcon></ToolBtn>
                <ToolBtn $w={6}><Caret $s={2} /></ToolBtn>
              </FormatRow>
              <FormatRow>
                <ToolBtn $w={5} />
                <ToolBtn><BoldB $b $s={12}>B</BoldB></ToolBtn>
                <ToolBtn><BoldB $i $s={12}>I</BoldB></ToolBtn>
                <ToolBtn><BoldB $u $s={12}>U</BoldB></ToolBtn>
                <Sep />
                <ToolBtn $w={16}><BoldB $s={10}>A<Mini>2</Mini></BoldB></ToolBtn>
                <ToolBtn $w={15}><BoldB $s={10}>A<MiniSub>2</MiniSub></BoldB></ToolBtn>
                <Sep />
                <ToolBtn><AlignIcon kind="l" /></ToolBtn>
                <ToolBtn $on><AlignIcon kind="c" /></ToolBtn>
                <ToolBtn><AlignIcon kind="r" /></ToolBtn>
                <ToolBtn $w={2} />
                <ToolBtn $w={16}><VAlignIcon y={2} /></ToolBtn>
                <ToolBtn $on $w={15}><VAlignIcon y={5} /></ToolBtn>
                <ToolBtn $w={15}><VAlignIcon y={8} /></ToolBtn>
                <ToolBtn $w={3} />
                <ToolBtn $w={15}><ToolIcon viewBox="0 0 13 13"><rect x="2" y="2" width="9" height="9" rx="3" fill="#cfe2f5" stroke="#2a6aa8" /><path d="M4 5h5M4 8h5M6.5 0v2M6.5 11v2M0 6.5h2M11 6.5h2" stroke="#2a6aa8" /></ToolIcon></ToolBtn>
              </FormatRow>
            </FormatStack>
          </GroupBody>
          <GroupLabel $pr={0}>Text Format</GroupLabel>
          <Launcher viewBox="0 0 7 7"><path d="M.5.5h3M.5.5v3M2.5 2.5l3.5 3.5M6 3v3H3" fill="none" stroke="#888" strokeWidth=".8" /></Launcher>
        </Group>

        <Group $w={42}>
          <GroupBody $pl={4}>
            <BigButton $w={36} $on>
              <BigIconBox>
                <BigIcon $s={24} viewBox="0 0 24 24"><path d="M12 1l11 11-11 11L1 12z" fill="#e8a9e6" /><path d="M12 8l7 7-7 7-7-7z" fill="#b056c0" /><path d="M12 13l4.5 4.5L12 22l-4.5-4.5z" fill="#6a2a90" /></BigIcon>
              </BigIconBox>
              <BigLabel>Solutions</BigLabel>
            </BigButton>
          </GroupBody>
          <GroupLabel />
        </Group>

        <Group $w={31}>
          <GroupBody $pl={5}>
            <IconGrid $cols={1}>
              <ToolIcon viewBox="0 0 13 13"><rect x="1.5" y="1.5" width="10" height="10" fill="#e8e8e8" stroke="#888" strokeDasharray="1.5 1" /><path d="M5 4l5 4-2.5.5L6.5 11z" fill="#555" /></ToolIcon>
              <ToolIcon viewBox="0 0 13 13"><rect x="1.5" y="2" width="10" height="9" fill="#dff3e4" stroke="#1a7a34" strokeDasharray="1.5 1" /><rect x="4" y="4" width="5" height="5" fill="#222" /></ToolIcon>
            </IconGrid>
            <SelectCaret $s={2} />
          </GroupBody>
          <GroupLabel $pl={3}>Select</GroupLabel>
        </Group>

        <Group $w={69}>
          <GroupBody $pl={4}>
            <IconGrid $cols={4}>
              <ToolIcon viewBox="0 0 13 13"><rect x="2" y="3" width="9" height="7.5" fill="none" stroke="#2a6aa0" strokeWidth="1.1" /></ToolIcon>
              <BoldB $s={13} $b $c="#2a6aa0">A</BoldB>
              <ToolIcon viewBox="0 0 13 13"><path d="M2 2l9 9" stroke="#1a8a5a" strokeWidth="1.2" /><circle cx="2" cy="2" r="1.3" fill="#235" /><circle cx="11" cy="11" r="1.3" fill="#235" /></ToolIcon>
              <ToolIcon viewBox="0 0 13 13"><path d="M3 9l6-6 2 2-6 6-3 1z" fill="#5a7f9c" /><path d="M9 2l2 2" stroke="#aaa" strokeWidth="2" /></ToolIcon>
              <ToolIcon viewBox="0 0 13 13"><ellipse cx="6.5" cy="6.5" rx="4.5" ry="4" fill="none" stroke="#2a6aa0" strokeWidth="1.1" /></ToolIcon>
              <ToolIcon viewBox="0 0 13 13"><path d="M2 11l8-8M10 3H6M10 3v4" fill="none" stroke="#2a6aa0" strokeWidth="1.2" /></ToolIcon>
              <ToolIcon viewBox="0 0 13 13"><path d="M2 3q8 0 8 8" fill="none" stroke="#1a8a3a" strokeWidth="1.2" /><circle cx="2" cy="3" r="1.3" fill="#235" /><circle cx="10" cy="11" r="1.3" fill="#235" /></ToolIcon>
              <ToolIcon viewBox="0 0 13 13"><path d="M1 6l5-4 3 2" fill="none" stroke="#aaa" /><path d="M7 5l4 4-2 .4L8 12z" fill="#444" /></ToolIcon>
            </IconGrid>
          </GroupBody>
          <GroupLabel $pl={1}>Tools</GroupLabel>
        </Group>

        <Group $w={46}>
          <GroupBody>
            <BigButton $w={47}>
              <BigIconBox>
                <BigIcon viewBox="0 0 24 24"><rect x="2" y="3" width="8" height="8" fill="#fff" stroke="#5a8aa8" /><rect x="4.5" y="5.5" width="3" height="3" fill="#c8a030" /><rect x="13" y="15" width="9" height="8" fill="#fff" stroke="#5a8aa8" /><rect x="16" y="17.5" width="3" height="3" fill="#c8a030" /><path d="M10 7h7v8" fill="none" stroke="#d8a040" strokeWidth="1.4" /></BigIcon>
              </BigIconBox>
              <BigLabel>Connector</BigLabel>
              <Caret $block $c="#888" />
            </BigButton>
          </GroupBody>
          <GroupLabel />
        </Group>

        <Group $w={120}>
          <GroupBody $pl={2}>
            <BigButton $w={29}>
              <BigIconBox>
                <BigIcon viewBox="0 0 24 24"><rect x="6" y="1" width="17" height="13" fill="none" stroke="#4a9ab0" /><rect x="1" y="4" width="18" height="14" fill="#fff" stroke="#4a9ab0" />{[[1, 4], [18, 4], [1, 17]].map(([x, y]) => <rect key={x + "" + y} x={x - 1.5} y={y - 1.5} width="4" height="4" fill="#3ac83a" />)}<path d="M11 10l9 9-4 .5 2 4-2 .5-2-4-3 2z" fill="#fff" stroke="#333" /></BigIcon>
              </BigIconBox>
              <BigLabel>Clone</BigLabel>
            </BigButton>
            <BigButton $w={29}>
              <BigIconBox>
                <BigIcon viewBox="0 0 24 24"><rect x="1" y="2" width="9" height="6" fill="#fff" stroke="#2aa03a" /><rect x="7" y="10" width="8" height="6" fill="#d8eef8" stroke="#4a9ab0" /><rect x="15" y="17" width="8" height="6" fill="#d8eef8" stroke="#4a9ab0" /><path d="M10 5h2M11 8v2M15 13h4v4" fill="none" stroke="#4a9ab0" /></BigIcon>
              </BigIconBox>
              <BigLabel>Chain</BigLabel>
            </BigButton>
            <BigButton $w={29}>
              <BigIconBox>
                <BigIcon viewBox="0 0 24 24"><rect x="7" y="2" width="10" height="6" fill="#fff" stroke="#2aa03a" /><path d="M12 8v7M4 15h16M4 15v3M12 15v3M20 15v3" fill="none" stroke="#4a80a8" /><rect x="1" y="18" width="6" height="5" fill="#d8eef8" stroke="#4a9ab0" /><rect x="9" y="18" width="6" height="5" fill="#d8eef8" stroke="#4a9ab0" /><rect x="17" y="18" width="6" height="5" fill="#d8eef8" stroke="#4a9ab0" /></BigIcon>
              </BigIconBox>
              <BigLabel>Tree</BigLabel>
            </BigButton>
            <BigButton $w={29} $on>
              <BigIconBox>
                <BigIcon viewBox="0 0 24 24"><path d="M1 4h22M12 4v8M1 12h22" stroke="#555" fill="none" /><rect x="12" y="14" width="9" height="7" fill="#fff" stroke="#666" /><path d="M9 14a4 4 0 1 0 0 7" fill="none" stroke="#555" strokeWidth="2.6" /><path d="M9 13v2.5" stroke="#d83020" strokeWidth="2.6" /></BigIcon>
              </BigIconBox>
              <BigLabel>Snap</BigLabel>
            </BigButton>
          </GroupBody>
          <GroupLabel $pr={44}>Flowchart</GroupLabel>
        </Group>

        <Group $w={67}>
          <GroupBody $pl={3}>
            <BigButton $w={33}>
              <BigIconBox>
                <BigIcon viewBox="0 0 24 24"><path d="M0 7h24M8 0v24" stroke="#e8a8a8" /><rect x="3" y="3" width="9" height="8" fill="none" stroke="#557" /><rect x="16" y="3" width="7" height="7" fill="#fff" stroke="#557" /><rect x="3" y="16" width="7" height="7" fill="#fff" stroke="#557" /></BigIcon>
              </BigIconBox>
              <BigLabel>Arrange<br />& Size</BigLabel>
            </BigButton>
            <BigButton $w={29} $on>
              <BigIconBox>
                <BigIcon viewBox="0 0 24 24"><path d="M10 1h4v3l1 5H9l1-5z" fill="#2a6a9c" /><path d="M6 9h12v5H6z" fill="#c8c8c8" /><path d="M6 14h12l2 9H4z" fill="#b87a30" /></BigIcon>
              </BigIconBox>
              <BigLabel>Format</BigLabel>
            </BigButton>
          </GroupBody>
          <GroupLabel $pl={3}>Panels</GroupLabel>
        </Group>

        <Group $w={101}>
          <GroupBody $pl={5}>
            <BigButton $w={31}>
              <BigIconBox>
                <BigIcon viewBox="0 0 24 24"><path d="M3 1h6l1 6v3h4V7l1-6h6l3 20h-9v-7h-6v7H0z" fill="#1f4a7d" /><path d="M4 2h3v6H4zM17 2h3v6h-3z" fill="#7aa6d0" /></BigIcon>
              </BigIconBox>
              <BigLabel>Find &<br />Replace</BigLabel>
            </BigButton>
            <BigButton $w={31}>
              <BigIconBox>
                <BigIcon viewBox="0 0 24 24"><text x="0" y="9" fontSize="8.5" fontWeight="700" fontFamily="Open Sans" fill="#2a6aa8">ABC</text><path d="M7 15l5 5 10-10" fill="none" stroke="#28a030" strokeWidth="3" /></BigIcon>
              </BigIconBox>
              <BigLabel>Spelling</BigLabel>
            </BigButton>
            <BigButton $w={31} $dim>
              <BigIconBox>
                <BigIcon viewBox="0 0 24 24"><ellipse cx="12" cy="5" rx="6" ry="4" fill="none" stroke="#bbb" /><path d="M12 9v5M10 12l2 2 2-2" fill="none" stroke="#bbb" /><rect x="6" y="15" width="12" height="8" fill="none" stroke="#bbb" /></BigIcon>
              </BigIconBox>
              <BigLabel>Change<br />Shape ▾</BigLabel>
            </BigButton>
          </GroupBody>
          <GroupLabel $pl={3}>Editing</GroupLabel>
        </Group>
      </Ribbon>

      <Main>
        {/* Solutions */}
        <Panel $w={130} $edge>
          <PanelHeader>Solutions<HeaderTools><PinGlyph /><CloseGlyph /></HeaderTools></PanelHeader>
          <TabStrip>
            <StripTab $w={40} $on>Solutions</StripTab>
            <StripTab $w={30}>Layers</StripTab>
            <StripTab $w={30}>Pages</StripTab>
          </TabStrip>
          <SearchRow>
            <SearchBox />
            <SearchGlyph viewBox="0 0 11 11"><path d="M5.5 .5l5 5-5 5-5-5z" fill="#e4b8ec" /><path d="M5.5 4l3 3-3 3-3-3z" fill="#a040b0" /><circle cx="3" cy="8" r="1.8" fill="none" stroke="#444" strokeWidth=".7" /></SearchGlyph>
          </SearchRow>
          <SolutionBody>
            <Tree>
              <TreeRoot><Caret $s={3} $c="#1e3f7d" />Site Plans</TreeRoot>
              <TreeHeading $mt={6}><Caret $s={3} $c="#1e3f7d" />Libraries</TreeHeading>
              <SaveIcon viewBox="0 0 12 12"><path d="M0 0h12v12H0z" fill="#0a62b8" /><path d="M3 1h6v4H3z" fill="#fff" /><path d="M3 7h6v5H3z" fill="#cfe2f5" /></SaveIcon>
              <TileClip $h={64}><TileSet items={parking} /></TileClip>
              <TreeCaption>Parking and roads</TreeCaption>
              <TileClip $h={66} $mt={14}><TileSet items={access} /></TileClip>
              <TreeCaption $h={11} $on>Site accessories</TreeCaption>
              <TileClip $h={64} $mt={15}><TileSet items={trees} /></TileClip>
              <TreeCaption>Trees and plants</TreeCaption>
              <TreeHeading $mt={7}><Caret $s={3} $c="#1e3f7d" />Templates</TreeHeading>
              <SiteThumb />
              <TreeCaption>Site Plan</TreeCaption>
              <TreeHeading $mt={7}><Caret $s={3} $c="#1e3f7d" />Samples</TreeHeading>
              <SampleThumb />
              <TreeCaption $plain>Design elements - Parking</TreeCaption>
              <Cursor viewBox="0 0 11 15"><path d="M1 1v11l3-2.5 2 4.5 2-1-2-4h4z" fill="#fff" stroke="#444" strokeWidth=".8" /></Cursor>
            </Tree>
            <VScroll $pad="3px 0 3px">
              <Up />
              <ScrollThumb $t={213} $h={98} />
              <Down />
            </VScroll>
          </SolutionBody>
        </Panel>

        {/* Library */}
        <Panel $w={75}>
          <PanelHeader>Library<HeaderTools><PinGlyph /><CloseGlyph /></HeaderTools></PanelHeader>
          <LibNav>
            <NavChevron viewBox="0 0 9 10"><path d="M6 1.5L2.5 5 6 8.5" fill="none" stroke="#1e4f8d" strokeWidth="1.3" /></NavChevron>
            <NavChevron viewBox="0 0 9 10"><path d="M3 1.5L6.5 5 3 8.5" fill="none" stroke="#1e4f8d" strokeWidth="1.3" /></NavChevron>
            <LibCombo>Site ac...<Caret $s={2} /></LibCombo>
          </LibNav>
          <LibBody>
            <LibList>
              <LibItem $mt={-18}>
                <LibIconBox $pt={20}><LibIcon $w={44} $h={10} viewBox="0 0 44 10">{[5, 16, 28, 39].map(x => <circle key={x} cx={x} cy={5} r="4.2" fill="#aaa" stroke="#555" />)}</LibIcon></LibIconBox>
                <LibCaption>4 bollards line</LibCaption>
              </LibItem>
              <LibItem>
                <LibIconBox $pt={6}><LibIcon $w={41} $h={27} viewBox="0 0 41 27"><rect x=".5" y=".5" width="40" height="26" fill="#f0f0f0" stroke="#ccc" strokeDasharray="2 1" /><circle cx="12" cy="15" r="6" fill="none" stroke="#777" strokeWidth="1.4" /><circle cx="29" cy="15" r="6" fill="none" stroke="#777" strokeWidth="1.4" /><path d="M12 15l6-7h8l3 7M18 8l2 7h-8M16 6h4M26 8l-1-2h3" fill="none" stroke="#777" strokeWidth="1.3" /></LibIcon></LibIconBox>
                <LibCaption>Bike rack</LibCaption>
              </LibItem>
              <LibItem>
                <LibIconBox><LibIcon $w={41} $h={41} viewBox="0 0 41 41"><rect x=".5" y=".5" width="40" height="40" fill="#efefef" stroke="#d0d0d0" /><path d="M6 8h13v7l5 12h5l2-11h5l-4 19H14z" fill="#777" /><path d="M22 6v8h-3l5 5 5-5h-3V6z" fill="#777" /><circle cx="21" cy="26" r="4" fill="#efefef" stroke="#777" /></LibIcon></LibIconBox>
                <LibCaption>Trash can</LibCaption>
              </LibItem>
              <LibItem>
                <LibIconBox><LibIcon $w={41} $h={41} viewBox="0 0 41 41"><rect x=".5" y=".5" width="40" height="40" fill="#efefef" stroke="#d0d0d0" /><circle cx="18" cy="8" r="3" fill="#808080" /><path d="M18 13v11h9l4 8" fill="none" stroke="#808080" strokeWidth="3" /><path d="M15 20a8.5 8.5 0 1 0 11 11" fill="none" stroke="#808080" strokeWidth="2.6" /></LibIcon></LibIconBox>
                <LibCaption>Handicapped sign</LibCaption>
              </LibItem>
              <LibItem>
                <LibIconBox><LibIcon $w={26} $h={41} viewBox="0 0 26 41"><rect x=".5" y=".5" width="25" height="40" fill="#fff" stroke="#333" /><path d="M.5 10L25 .5M.5 10L25 20M25 20L.5 30M.5 30L25 40" fill="none" stroke="#333" /></LibIcon></LibIconBox>
                <LibCaption>Dumpster</LibCaption>
              </LibItem>
              <LibItem $on>
                <LibIconBox><LibIcon $w={42} $h={36} viewBox="-21 -15 42 36"><Hydrant x={0} y={0} /></LibIcon></LibIconBox>
                <LibCaption>Fire hydrant</LibCaption>
              </LibItem>
              <LibItem>
                <LibIconBox><LibIcon $w={42} $h={42} viewBox="-21 -21 42 42"><Defs /><Manhole x={0} y={0} s={2} gap={5.5} w={.28} /></LibIcon></LibIconBox>
                <LibCaption>Manhole</LibCaption>
              </LibItem>
              <LibItem>
                <LibIconBox $pt={4}><LibIcon $w={42} $h={27} viewBox="0 0 42 27"><rect x=".5" y=".5" width="41" height="26" fill="#6e6e6e" stroke="#222" /><path d="M0 6.5h42M0 13h42M0 19.5h42M21 0v27" stroke="#222" /></LibIcon></LibIconBox>
                <LibCaption>Drain</LibCaption>
              </LibItem>
              <LibItem>
                <LibIconBox $pt={6}><LibIcon $w={42} $h={17} viewBox="0 0 42 17"><rect x=".5" y="1" width="41" height="15.5" fill="#b4905f" stroke="#4b3b22" /><rect x=".5" y="1" width="41" height="4" fill="#bf9d6d" stroke="#4b3b22" strokeWidth=".6" /><path d="M0 11.5h42" stroke="#4b3b22" /><path d="M3.5 0v17M38.5 0v17" stroke="#4b3b22" strokeDasharray="2 2" /></LibIcon></LibIconBox>
                <LibCaption>Bench</LibCaption>
              </LibItem>
            </LibList>
            <VScroll $w={12}>
              <Up />
              <ScrollThumb $t={295} $h={264} />
              <Down />
            </VScroll>
          </LibBody>
        </Panel>

        {/* Centre */}
        <Centre>
          <RulerRow>
            <RulerCorner>m</RulerCorner>
            <HRuler />
            <ScrollCap><CapUp /></ScrollCap>
          </RulerRow>
          <CanvasRow>
            <VRuler />
            <Canvas><SitePlan /></Canvas>
            <CanvasScroll><ScrollCap><CapDown /></ScrollCap></CanvasScroll>
          </CanvasRow>
          <PageBar>
            <PageArrow>&lt;</PageArrow>
            <PageCombo>Page1 (1/1)<Caret $s={2} /></PageCombo>
            <PageArrow>&gt;</PageArrow>
            <HScrollEnd><SideCaret $flip $c="#666" /></HScrollEnd>
            <HScrollTrack />
            <HScrollEnd><SideCaret $c="#666" /></HScrollEnd>
            <FitGlyph viewBox="0 0 10 10"><rect x="1" y="1" width="8" height="8" fill="#ddd" stroke="#999" strokeDasharray="1.5 1" /><rect x="3.5" y="3.5" width="3" height="3" fill="#aaa" /></FitGlyph>
          </PageBar>
          <ColorPanel>
            <ColorHead>Colors<HeaderTools><PinGlyph /><CloseGlyph /></HeaderTools></ColorHead>
            <SwatchRow>
              <SwatchTool>
                <Glyph viewBox="0 0 8 8"><circle cx="3" cy="3" r="2.4" fill="#3a70b8" /><circle cx="5.5" cy="5.5" r="2.2" fill="#2a5aa0" /></Glyph>
                <DotsGlyph viewBox="0 0 2 8"><path d="M1 1v.01M1 4v.01M1 7v.01" stroke="#222" strokeWidth="1.6" strokeLinecap="round" /></DotsGlyph>
              </SwatchTool>
              {COLORS.map((c, i) => <Swatch key={i} $c={c} />)}
            </SwatchRow>
          </ColorPanel>
        </Centre>

        {/* Format */}
        <Panel $w={226}>
          <PanelHeader>Format<HeaderTools><PinGlyph /><CloseGlyph /></HeaderTools></PanelHeader>
          <TabStrip>
            <StripTab $w={50}>Hypernote</StripTab>
            <StripTab $w={20}>Info</StripTab>
            <StripTab $w={32} $on>Format</StripTab>
            <StripTab $w={66}>Custom Prope...</StripTab>
            <StripTab $w={58}>Arrange &amp; Size</StripTab>
          </TabStrip>
          <FormatBody>
            <SectionRow $open><Caret $s={3} $c="#222" />Fill<SectionRule /></SectionRow>
            <TypeRow>
              <TypeLabel>Type</TypeLabel>
              <TypeSelect>Solid<Caret $s={2} /></TypeSelect>
            </TypeRow>
            <FillRow>
              <ColorPick><ColorChip /><ColorArrow><Caret $s={2} $c="#333" /></ColorArrow></ColorPick>
              <Slider><SliderThumb /></Slider>
              <Percent>100%</Percent>
              <Spin><SpinBtn><SpinUp /></SpinBtn><SpinBtn><Caret $s={2} $c="#333" /></SpinBtn></Spin>
            </FillRow>
            <SectionRow $mt={6}><SideCaret />Border<SectionRule /></SectionRow>
            <SectionRow><SideCaret />Shadow<SectionRule /></SectionRow>
            <SectionRow $open><Caret $s={3} $c="#222" />Make Same Attributes<SectionRule /></SectionRow>
            <AttrRow>
              <Attr $w={26}><AttrIcon viewBox="0 0 14 15"><path d="M5.5 1h3v6h-3z" fill="#aaa" /><path d="M3 7h8v3H3z" fill="#bbb" /><path d="M3 10h8v4H3z" fill="#999" /></AttrIcon>Fill</Attr>
              <Attr $w={36}><AttrIcon viewBox="0 0 14 15"><path d="M1 4h12M1 7h12" stroke="#999" /><path d="M1 10h12M1 13h12" stroke="#999" strokeDasharray="1.5 1" /></AttrIcon>Border</Attr>
              <Attr $w={32}><AttrIcon viewBox="0 0 14 15"><text x="7" y="12" fontSize="13" fontFamily="Liberation Serif" textAnchor="middle" fill="#999">A</text></AttrIcon>Text<br />Format</Attr>
            </AttrRow>
          </FormatBody>
        </Panel>
      </Main>

      <Status>
        <Ready>Ready</Ready>
        Mouse: [ -1.02, 12.85 ] m
        <StatusRight>
          <StatusIcon viewBox="0 0 12 12"><path d="M3 6V3h1v2V2h1v3V1.5h1V5V2h1v4l1-1 1 1-2 4-1 1H5L3 8z" fill="#fff" /></StatusIcon>
          <StatusIcon viewBox="0 0 12 12"><rect x="1" y="1" width="7" height="7" fill="none" stroke="#f5d7cd" strokeDasharray="1 1" /><circle cx="7" cy="7.5" r="2" fill="none" stroke="#fff" /><path d="M8.5 9l2 2" stroke="#fff" /></StatusIcon>
          <StatusIcon viewBox="0 0 12 12"><rect x="1" y="1" width="10" height="10" fill="none" stroke="#f5d7cd" strokeDasharray="1 1" /><rect x="3.5" y="3" width="5" height="6" fill="#f0e0d8" /></StatusIcon>
          <span>-</span>
          <ZoomTrack><ZoomThumb /></ZoomTrack>
          <span>+</span>
          <PercentText>101%</PercentText>
        </StatusRight>
      </Status>
      <BlackLine />
    </Shell>
  );
}
